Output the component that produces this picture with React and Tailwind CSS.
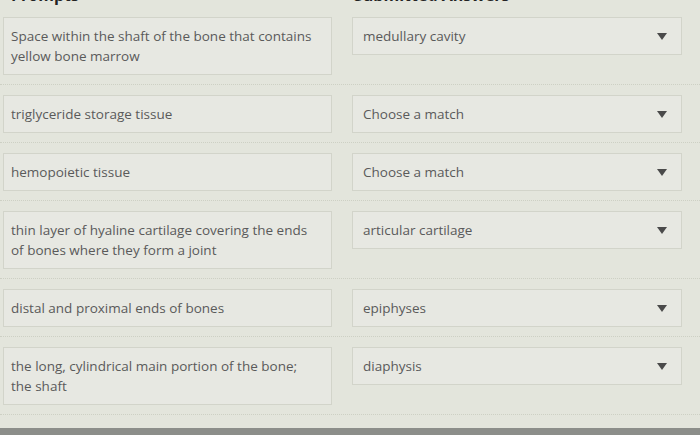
import React from "react";

const rows = [
  { prompt: "Space within the shaft of the bone that contains yellow bone marrow", answer: "medullary cavity" },
  { prompt: "triglyceride storage tissue", answer: "Choose a match" },
  { prompt: "hemopoietic tissue", answer: "Choose a match" },
  { prompt: "thin layer of hyaline cartilage covering the ends of bones where they form a joint", answer: "articular cartilage" },
  { prompt: "distal and proximal ends of bones", answer: "epiphyses" },
  { prompt: "the long, cylindrical main portion of the bone; the shaft", answer: "diaphysis" },
];

function Caret() {
  return (
    <svg width="10" height="7" viewBox="0 0 10 7" className="shrink-0">
      <path d="M0 0 L10 0 L5 7 Z" fill="#4a4a4a" />
    </svg>
  );
}

export default function App() {
  return (
    <div
      className="h-[435px] w-[700px] overflow-hidden bg-[#e3e5dc] flex flex-col text-[#5a5a5a]"
      style={{ fontFamily: '"Open Sans", "Noto Sans", sans-serif' }}
    >
      <div className="-mt-[16px] h-[23px] grid grid-cols-[329px_330px] gap-x-5 pl-[3px] text-[16px] leading-[23px] font-bold text-[#222]">
        <div className="pl-[8px]">Prompts</div>
        <div className="pl-[2px]">Submitted Answers</div>
      </div>
      {rows.map((r, i) => (
        <div
          key={i}
          className="pt-[10px] pb-[9px] border-b border-dotted border-[#cdd0c4] grid grid-cols-[329px_330px] gap-x-5 pl-[3px] items-start"
        >
          <div className="border border-[#d2d4ca] bg-[#e7e8e2] pl-[7px] pr-[12px] py-[8px] text-[13.5px] leading-[20px]">
            {r.prompt}
          </div>
          <div className="border border-[#d2d4ca] bg-[#e7e8e2] pl-[10px] pr-[14px] py-[8px] text-[13.5px] leading-[20px] flex items-center justify-between">
            <span>{r.answer}</span>
            <Caret />
          </div>
        </div>
      ))}
      <div className="flex-1" />
      <div className="h-[7px] bg-[#8c8e8a]" />
    </div>
  );
}
